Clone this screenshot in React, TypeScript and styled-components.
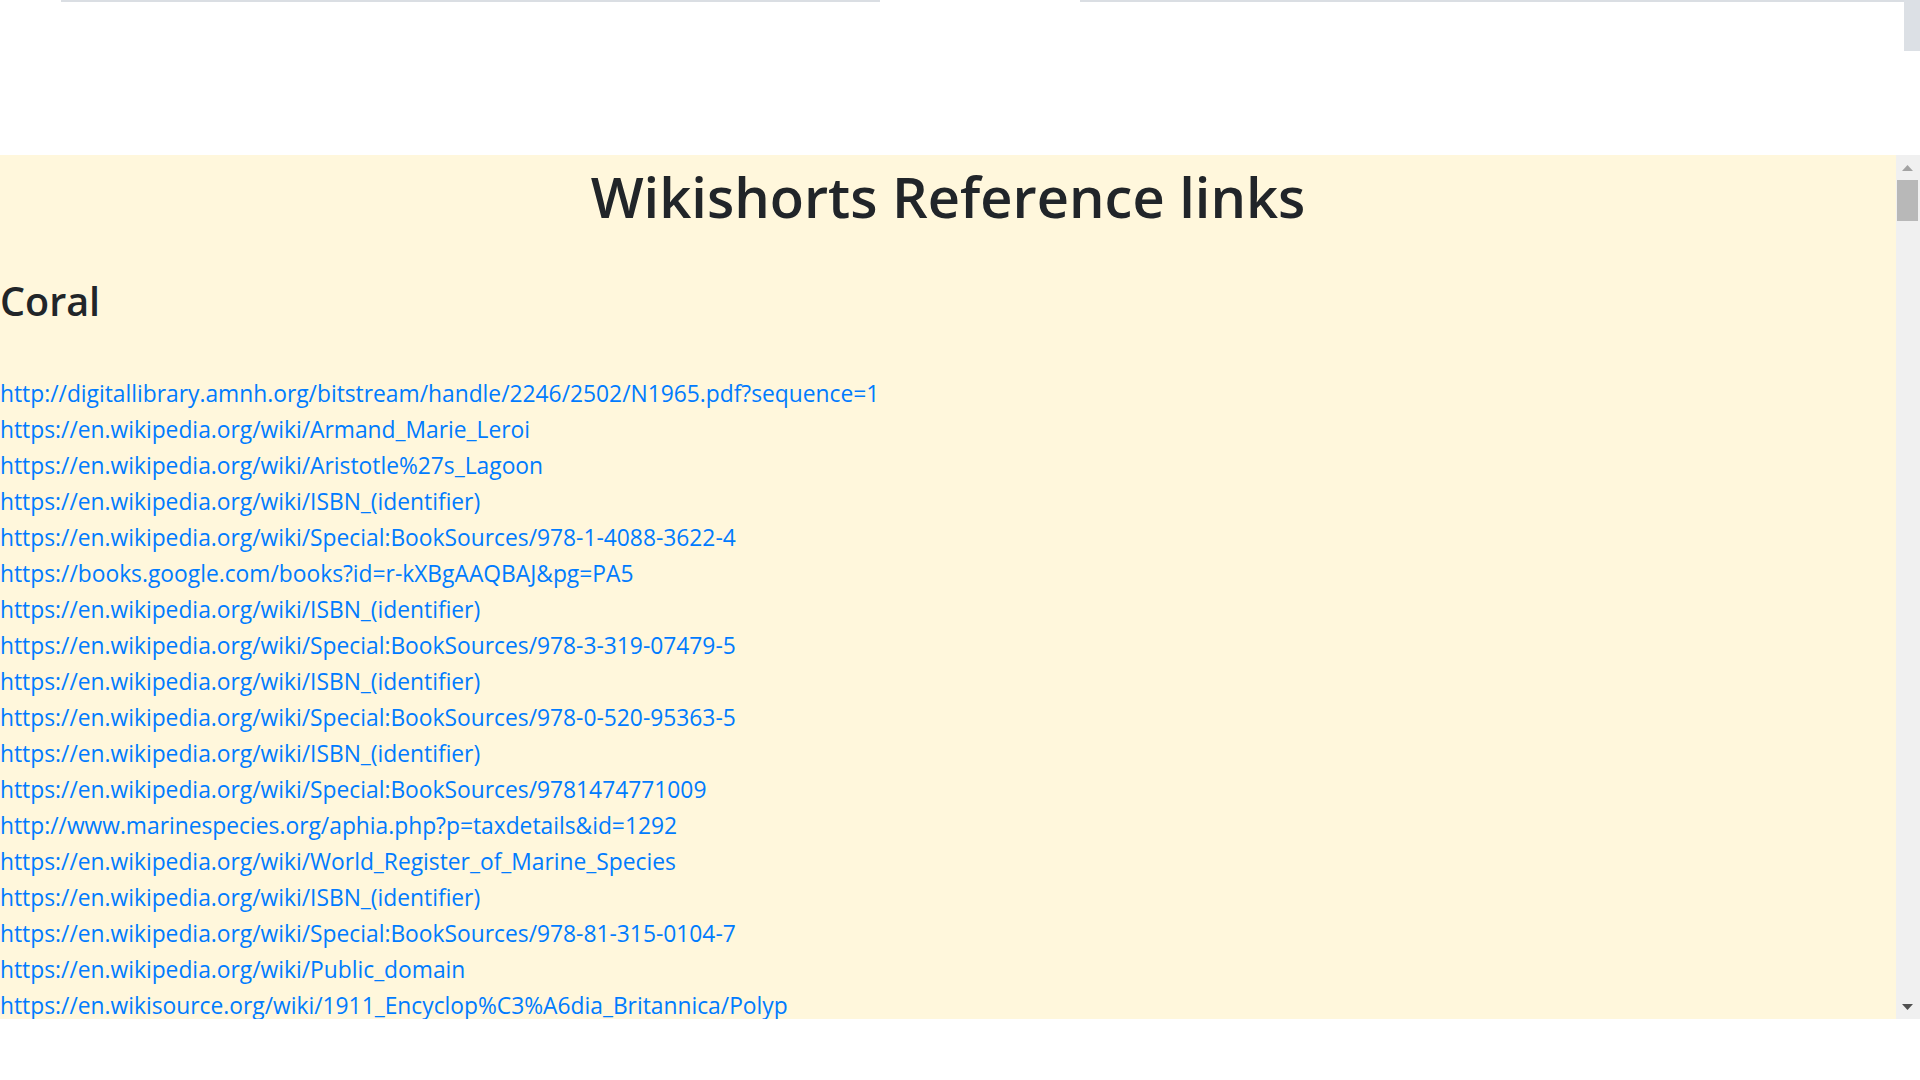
import React from "react";
import styled, { createGlobalStyle } from "styled-components";

const GlobalStyle = createGlobalStyle`
  html, body {
    margin: 0;
    padding: 0;
    background: #ffffff;
    overflow: hidden;
  }
  body {
    font-family: "Open Sans", "Noto Sans", "Liberation Sans", sans-serif;
    color: #212529;
  }
`;

const Screen = styled.div`
  width: 1920px;
  height: 1080px;
  display: flex;
  flex-direction: column;
  background: #ffffff;
`;

const TopArea = styled.div`
  height: 155px;
  display: flex;
  align-items: flex-start;
`;

const TopRule = styled.div<{ $w: number; $ml: number }>`
  height: 2px;
  width: ${(p) => p.$w}px;
  margin-left: ${(p) => p.$ml}px;
  background: #dadee3;
`;

const EdgeStrip = styled.div`
  margin-left: auto;
  width: 16px;
  height: 51px;
  background: #dce0e5;
`;

const Frame = styled.div`
  height: 864px;
  width: 1920px;
  display: flex;
  background: #fff7dc;
`;

const Viewport = styled.div`
  flex: 1;
  min-width: 0;
  overflow: hidden;
`;

const ScrollBar = styled.div`
  width: 24px;
  display: flex;
  flex-direction: column;
  background: #f0f0f0;
`;

const ScrollButton = styled.div`
  height: 25px;
  display: flex;
  align-items: center;
  justify-content: center;
  padding-right: 1px;
`;

const Track = styled.div`
  flex: 1;
  display: flex;
  flex-direction: column;
  padding: 0 2px 0 1px;
`;

const Thumb = styled.div`
  height: 41px;
  background: #b8b8b8;
`;

const Page = styled.main`
  display: flex;
  flex-direction: column;
  padding-top: 7.5px;
`;

const Title = styled.h1`
  margin: 0 0 12px;
  text-align: center;
  font-size: 56px;
  font-weight: 600;
  line-height: 1.2;
  color: #212529;
`;

const Section = styled.section`
  display: flex;
  flex-direction: column;
  padding-top: 36px;
`;

const SectionTitle = styled.h3`
  margin: 0 0 12px;
  font-size: 39.5px;
  font-weight: 600;
  line-height: 1.2;
  color: #212529;
`;

const LinkList = styled.div`
  display: flex;
  flex-direction: column;
  align-items: flex-start;
  padding-top: 38.5px;
`;

const RefLink = styled.a`
  font-size: 22.8px;
  line-height: 36px;
  white-space: nowrap;
  color: #007bff;
  text-decoration: none;
`;

const BottomArea = styled.div`
  flex: 1;
  background: #ffffff;
`;

const coralLinks = [
  "http://digitallibrary.amnh.org/bitstream/handle/2246/2502/N1965.pdf?sequence=1",
  "https://en.wikipedia.org/wiki/Armand_Marie_Leroi",
  "https://en.wikipedia.org/wiki/Aristotle%27s_Lagoon",
  "https://en.wikipedia.org/wiki/ISBN_(identifier)",
  "https://en.wikipedia.org/wiki/Special:BookSources/978-1-4088-3622-4",
  "https://books.google.com/books?id=r-kXBgAAQBAJ&pg=PA5",
  "https://en.wikipedia.org/wiki/ISBN_(identifier)",
  "https://en.wikipedia.org/wiki/Special:BookSources/978-3-319-07479-5",
  "https://en.wikipedia.org/wiki/ISBN_(identifier)",
  "https://en.wikipedia.org/wiki/Special:BookSources/978-0-520-95363-5",
  "https://en.wikipedia.org/wiki/ISBN_(identifier)",
  "https://en.wikipedia.org/wiki/Special:BookSources/9781474771009",
  "http://www.marinespecies.org/aphia.php?p=taxdetails&id=1292",
  "https://en.wikipedia.org/wiki/World_Register_of_Marine_Species",
  "https://en.wikipedia.org/wiki/ISBN_(identifier)",
  "https://en.wikipedia.org/wiki/Special:BookSources/978-81-315-0104-7",
  "https://en.wikipedia.org/wiki/Public_domain",
  "https://en.wikisource.org/wiki/1911_Encyclop%C3%A6dia_Britannica/Polyp",
];

const ArrowUp = () => (
  <svg width="11" height="6" viewBox="0 0 11 6">
    <polygon points="0,6 11,6 5.5,0" fill="#a3a3a3" />
  </svg>
);

const ArrowDown = () => (
  <svg width="11" height="6" viewBox="0 0 11 6">
    <polygon points="0,0 11,0 5.5,6" fill="#505050" />
  </svg>
);

export default function App() {
  return (
    <>
      <GlobalStyle />
      <Screen>
        <TopArea>
          <TopRule $w={819} $ml={61} />
          <TopRule $w={824} $ml={200} />
          <EdgeStrip />
        </TopArea>
        <Frame>
          <Viewport>
            <Page>
              <Title>Wikishorts Reference links</Title>
              <Section>
                <SectionTitle>Coral</SectionTitle>
                <LinkList>
                  {coralLinks.map((href, i) => (
                    <RefLink key={i} href={href}>
                      {href}
                    </RefLink>
                  ))}
                </LinkList>
              </Section>
            </Page>
          </Viewport>
          <ScrollBar>
            <ScrollButton>
              <ArrowUp />
            </ScrollButton>
            <Track>
              <Thumb />
            </Track>
            <ScrollButton>
              <ArrowDown />
            </ScrollButton>
          </ScrollBar>
        </Frame>
        <BottomArea />
      </Screen>
    </>
  );
}
